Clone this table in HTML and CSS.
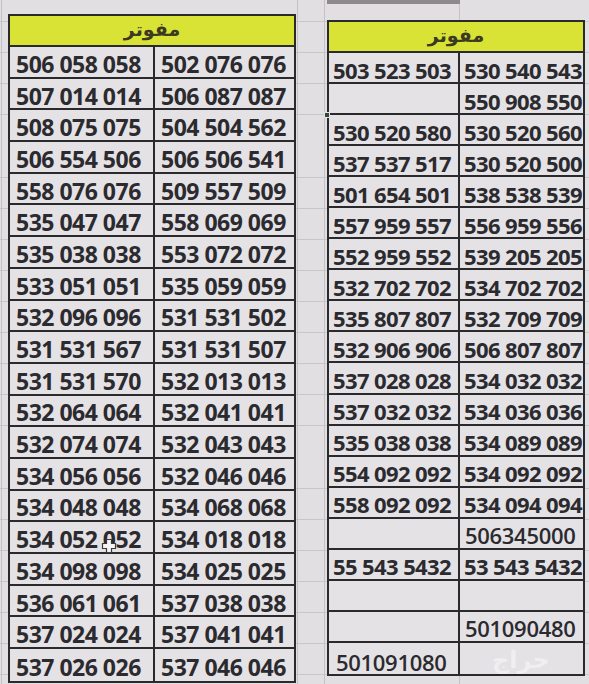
FILE: index.html
```html
<!DOCTYPE html>
<html lang="ar">
<head>
<meta charset="utf-8">
<title>أرقام مفوترة</title>
<link rel="stylesheet" href="styles.css">
</head>
<body>
<div class="sheet">
  <div class="topband"></div>
  <div class="tables">
    <div class="tbl tbl-left">
      <div class="head" dir="rtl">مفوتر</div>
      <div class="c">506 058 058</div><div class="c">502 076 076</div>
      <div class="c">507 014 014</div><div class="c">506 087 087</div>
      <div class="c">508 075 075</div><div class="c">504 504 562</div>
      <div class="c">506 554 506</div><div class="c">506 506 541</div>
      <div class="c">558 076 076</div><div class="c">509 557 509</div>
      <div class="c">535 047 047</div><div class="c">558 069 069</div>
      <div class="c">535 038 038</div><div class="c">553 072 072</div>
      <div class="c">533 051 051</div><div class="c">535 059 059</div>
      <div class="c">532 096 096</div><div class="c">531 531 502</div>
      <div class="c">531 531 567</div><div class="c">531 531 507</div>
      <div class="c">531 531 570</div><div class="c">532 013 013</div>
      <div class="c">532 064 064</div><div class="c">532 041 041</div>
      <div class="c">532 074 074</div><div class="c">532 043 043</div>
      <div class="c">534 056 056</div><div class="c">532 046 046</div>
      <div class="c">534 048 048</div><div class="c">534 068 068</div>
      <div class="c cursor-cell">534 052 052<span class="cursor"><svg width="16" height="16" viewBox="0 0 16 16"><path d="M5.5 1.5h5v4h4v5h-4v4h-5v-4h-4v-5h4z" fill="#f4f4f4" stroke="#3a3a3a" stroke-width="1.2"/></svg></span></div><div class="c">534 018 018</div>
      <div class="c">534 098 098</div><div class="c">534 025 025</div>
      <div class="c">536 061 061</div><div class="c">537 038 038</div>
      <div class="c">537 024 024</div><div class="c">537 041 041</div>
      <div class="c last">537 026 026</div><div class="c last">537 046 046</div>
    </div>

    <div class="tbl tbl-right">
      <div class="head" dir="rtl">مفوتر</div>
      <div class="c">503 523 503</div><div class="c">530 540 543</div>
      <div class="c"><span class="handle"></span></div><div class="c">550 908 550</div>
      <div class="c">530 520 580</div><div class="c">530 520 560</div>
      <div class="c">537 537 517</div><div class="c">530 520 500</div>
      <div class="c">501 654 501</div><div class="c">538 538 539</div>
      <div class="c">557 959 557</div><div class="c">556 959 556</div>
      <div class="c">552 959 552</div><div class="c">539 205 205</div>
      <div class="c">532 702 702</div><div class="c">534 702 702</div>
      <div class="c">535 807 807</div><div class="c">532 709 709</div>
      <div class="c">532 906 906</div><div class="c">506 807 807</div>
      <div class="c">537 028 028</div><div class="c">534 032 032</div>
      <div class="c">537 032 032</div><div class="c">534 036 036</div>
      <div class="c">535 038 038</div><div class="c">534 089 089</div>
      <div class="c">554 092 092</div><div class="c">534 092 092</div>
      <div class="c">558 092 092</div><div class="c">534 094 094</div>
      <div class="c"></div><div class="c plain centered">506345000</div>
      <div class="c">55 543 5432</div><div class="c">53 543 5432</div>
      <div class="c"></div><div class="c"></div>
      <div class="c"></div><div class="c plain centered">501090480</div>
      <div class="c last plain low">501091080</div><div class="c last"><span class="watermark" dir="rtl">حراج</span></div>
    </div>
  </div>
</div>
</body>
</html>
```

FILE: styles.css
```css
* { box-sizing: border-box; }

html, body {
  margin: 0;
  padding: 0;
}

body {
  width: 589px;
  height: 684px;
  overflow: hidden;
  background-color: #e1dfe2;
  background-image:
    linear-gradient(to right, transparent 1px, #c4c2c6 1px, #c4c2c6 2px, transparent 2px),
    linear-gradient(to right, transparent 297px, #c4c2c6 297px, #c4c2c6 298px, transparent 298px),
    linear-gradient(to right, transparent 324px, #c4c2c6 324px, #c4c2c6 325px, transparent 325px),
    linear-gradient(to right, transparent 459px, #c4c2c6 459px, #c4c2c6 460px, transparent 460px),
    repeating-linear-gradient(to bottom, transparent 0, transparent 30.1px, #c8c6ca 30.1px, #c8c6ca 31.1px);
  background-position: 0 0, 0 0, 0 0, 0 0, 0 -9px;
  font-family: "Open Sans", "DejaVu Sans", sans-serif;
  color: #2b2a2f;
}

.sheet {
  position: relative;
  width: 589px;
  height: 684px;
}

.topband {
  position: absolute;
  left: 327px;
  top: 0;
  width: 133px;
  height: 4px;
  background: #8e8a8c;
}

.tables {
  display: flex;
  align-items: flex-start;
  padding-left: 8px;
}

.tbl {
  position: relative;
  display: grid;
  border: 2px solid #2a292c;
  background: #e4e2e5;
}

.tbl-left {
  margin-top: 14px;
  width: 288px;
  grid-template-columns: 145px 139px;
  grid-template-rows: 31px repeat(20, 31.7px);
}

.tbl-right {
  margin-top: 20px;
  margin-left: 31px;
  width: 258px;
  grid-template-columns: 131px 123px;
  grid-template-rows: 31px repeat(20, 31.05px);
}

.head {
  grid-column: 1 / 3;
  display: flex;
  align-items: center;
  justify-content: center;
  background: #d9e335;
  border-bottom: 2px solid #2a292c;
  font-family: "DejaVu Sans", sans-serif;
  font-weight: 700;
  font-size: 19px;
  color: #3b3a22;
  padding-bottom: 3px;
}

.c {
  position: relative;
  display: flex;
  align-items: center;
  border-bottom: 2px solid #2a292c;
  font-weight: 700;
  white-space: nowrap;
  padding-top: 4px;
}

.c:nth-child(even) {
  border-right: 2px solid #2a292c;
}

.c.last {
  border-bottom: none;
}

.tbl-left .c {
  font-size: 23px;
  letter-spacing: -0.5px;
  padding-left: 6px;
}

.tbl-right .c {
  font-size: 22px;
  letter-spacing: -0.6px;
  padding-left: 4px;
}

.tbl-right .c.plain {
  font-weight: 600;
  letter-spacing: -0.3px;
}

.tbl-right .c.centered {
  padding-left: 5px;
}

.tbl-right .c.low {
  padding-top: 8px;
  padding-left: 7px;
}

.cursor {
  position: absolute;
  left: 91px;
  top: 16px;
  line-height: 0;
}

.handle {
  position: absolute;
  left: -5px;
  bottom: -5px;
  width: 6px;
  height: 6px;
  background: #2f4a3c;
  border: 1px solid #e4e2e5;
}

.watermark {
  font-family: "DejaVu Sans", sans-serif;
  font-size: 24px;
  font-weight: 700;
  color: rgba(255, 255, 255, 0.45);
  line-height: 1;
  padding-left: 28px;
}
```
